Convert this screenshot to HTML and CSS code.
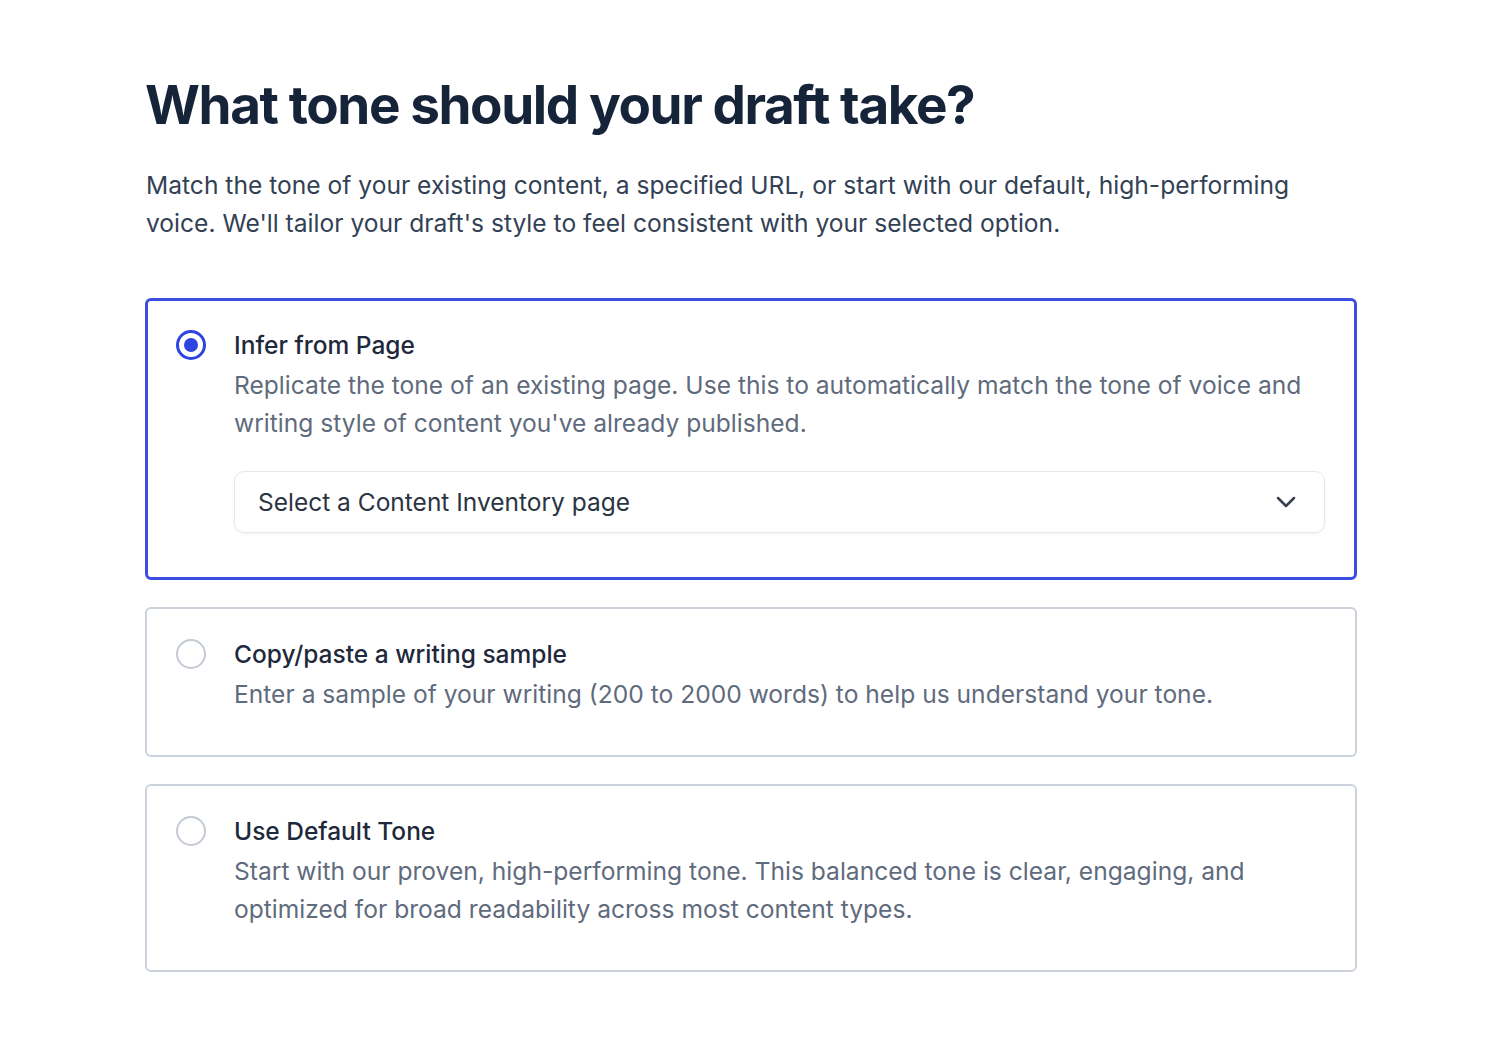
FILE: index.html
```html
<!DOCTYPE html>
<html lang="en">
<head>
<meta charset="utf-8">
<title>Tone</title>
<link rel="stylesheet" href="styles.css">
</head>
<body>
<main class="page">
  <h1 class="title">What tone should your draft take?</h1>
  <p class="lead">Match the tone of your existing content, a specified URL, or start with our default, high-performing voice. We'll tailor your draft's style to feel consistent with your selected option.</p>

  <div class="options">
    <div class="card card-selected">
      <span class="radio radio-on"><span class="dot"></span></span>
      <div class="body">
        <div class="opt-title">Infer from Page</div>
        <div class="opt-desc">Replicate the tone of an existing page. Use this to automatically match the tone of voice and writing style of content you've already published.</div>
        <div class="select">
          <span>Select a Content Inventory page</span>
          <svg class="chev" width="22" height="22" viewBox="0 0 22 22" fill="none"><path d="M3 7l8 8 8-8" stroke="#374151" stroke-width="2.5" stroke-linecap="round" stroke-linejoin="round"/></svg>
        </div>
      </div>
    </div>

    <div class="card">
      <span class="radio"></span>
      <div class="body">
        <div class="opt-title">Copy/paste a writing sample</div>
        <div class="opt-desc">Enter a sample of your writing (200 to 2000 words) to help us understand your tone.</div>
      </div>
    </div>

    <div class="card">
      <span class="radio"></span>
      <div class="body">
        <div class="opt-title">Use Default Tone</div>
        <div class="opt-desc">Start with our proven, high-performing tone. This balanced tone is clear, engaging, and optimized for broad readability across most content types.</div>
      </div>
    </div>
  </div>
</main>
</body>
</html>
```

FILE: styles.css
```css
* { box-sizing: border-box; }
html, body { margin: 0; padding: 0; background: #ffffff; }
body {
  font-family: Inter, "Noto Sans", "Liberation Sans", sans-serif;
  color: #1e293b;
}
.page {
  width: 1212px;
  margin-left: 145px;
  padding-top: 72px;
}
.title {
  margin: 0;
  font-size: 53px;
  line-height: 66px;
  font-weight: 700;
  letter-spacing: -1.4px;
  color: #16243a;
}
.lead {
  margin: 29px 0 0 1px;
  font-size: 24.6px;
  line-height: 37.5px;
  color: #334155;
  max-width: 1170px;
}
.options {
  margin-top: 56px;
  display: flex;
  flex-direction: column;
  gap: 27px;
}
.card {
  display: flex;
  gap: 28px;
  border: 2px solid #cbd2dc;
  border-radius: 6px;
  padding: 26px 30px 42px 29px;
  background: #fff;
}
.card-selected {
  border: 3px solid #3b4ee0;
  padding: 25px 29px 44px 28px;
}
.radio {
  flex: none;
  width: 30px;
  height: 30px;
  margin-top: 4px;
  border-radius: 50%;
  border: 2px solid #c4cad4;
  display: flex;
  align-items: center;
  justify-content: center;
}
.radio-on {
  border: 3px solid #2f43e0;
}
.dot {
  width: 14px;
  height: 14px;
  border-radius: 50%;
  background: #2f43e0;
}
.body { flex: 1; min-width: 0; }
.opt-title {
  font-size: 24.5px;
  line-height: 38px;
  font-weight: 500;
  color: #1e293b;
}
.opt-desc {
  margin-top: 2px;
  font-size: 24.6px;
  line-height: 38px;
  color: #5f6b7d;
  max-width: 1080px;
}
.select {
  margin-top: 29px;
  height: 62px;
  border: 1.5px solid #e6e8ec;
  border-radius: 10px;
  box-shadow: 0 1px 3px rgba(15, 23, 42, 0.06);
  display: flex;
  align-items: center;
  justify-content: space-between;
  padding: 0 27px 0 23px;
  font-size: 24.5px;
  color: #2b3443;
}
.chev { flex: none; }
```
